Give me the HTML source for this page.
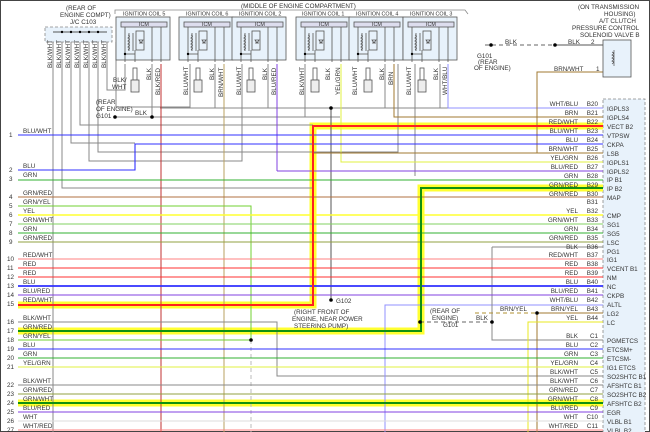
<!DOCTYPE html><html><head><meta charset="utf-8"><style>html,body{margin:0;padding:0;background:#fff;}svg{display:block}text{font-family:"Liberation Sans",sans-serif;font-size:6.3px;fill:#333}.ct{font-size:5.4px}</style></head><body>
<svg width="650" height="432" viewBox="0 0 650 432" xmlns="http://www.w3.org/2000/svg">
<rect x="0" y="0" width="650" height="432" fill="#fff"/>
<rect x="0.5" y="0.5" width="649" height="431" fill="none" stroke="#444" stroke-width="1"/>
<rect x="603" y="99" width="42" height="335" fill="#e8f2fb" stroke="#888" stroke-dasharray="3,2" stroke-width="0.8"/>
<g fill="none" stroke="#ffff30" stroke-width="7">
<polyline points="18,305 313,305 313,126 603,126"/>
<polyline points="18,331 421,331 421,188 603,188"/>
<line x1="18" y1="403" x2="603" y2="403"/>
</g>
<g fill="none" stroke-width="1">
<line x1="53" y1="42" x2="53" y2="432" stroke="#888"/>
<polyline points="62,42 62,188 313,188" stroke="#888"/>
<polyline points="71,42 71,143 135,143" stroke="#888"/>
<polyline points="80,42 80,125 313,125" stroke="#888"/>
<polyline points="89,42 89,161 242,161 242,64" stroke="#888"/>
<polyline points="98,42 98,152 398,152 398,64" stroke="#888"/>
<polyline points="107,42 107,90 125,90 125,64" stroke="#888"/>
<polyline points="116,42 116,107 190,107 190,64" stroke="#888"/>
<polyline points="305,64 305,117 152,117 152,64" stroke="#888"/>
<polyline points="215,64 215,108" stroke="#888"/>
<polyline points="268,64 268,108" stroke="#888"/>
<polyline points="385,64 385,108" stroke="#888"/>
<polyline points="440,64 440,108" stroke="#888"/>
<polyline points="415,64 415,176" stroke="#888"/>
<line x1="115" y1="117" x2="340" y2="117" stroke="#888"/>
<line x1="160" y1="108" x2="448" y2="108" stroke="#888"/>
<line x1="161" y1="64" x2="161" y2="432" stroke="#c03030"/>
<line x1="224" y1="64" x2="224" y2="432" stroke="#b8a060"/>
<polyline points="277,64 277,171" stroke="#8040e0"/>
<polyline points="341,64 341,162 603,162" stroke="#e0f040"/>
<polyline points="394,64 394,117 603,117" stroke="#a07830"/>
<polyline points="448,64 448,108 603,108" stroke="#9090ff"/>
<polyline points="18,206 251,206 251,340" stroke="#70d030"/>
<line x1="251" y1="340" x2="251" y2="432" stroke="#bbb" stroke-dasharray="4,3"/>
<polyline points="18,322 277,322 277,376 603,376" stroke="#888"/>
<line x1="331" y1="108" x2="331" y2="300" stroke="#555"/>
<polyline points="385,432 385,305 603,305" stroke="#9090ff"/>
<polyline points="492,247 603,247" stroke="#888"/>
<polyline points="492,247 492,340 603,340" stroke="#888"/>
<polyline points="603,72 537,72 537,153" stroke="#a07830"/>
<line x1="537" y1="313" x2="537" y2="432" stroke="#a07830"/>
<line x1="537" y1="313" x2="603" y2="313" stroke="#a07830"/>
<line x1="475" y1="313" x2="537" y2="313" stroke="#b09030" stroke-dasharray="4,3"/>
<line x1="420" y1="322" x2="492" y2="322" stroke="#666" stroke-dasharray="4,3"/>
<polyline points="528,432 528,322 603,322" stroke="#e8e820"/>
<line x1="485" y1="45" x2="555" y2="45" stroke="#666" stroke-dasharray="4,3"/>
<line x1="555" y1="45" x2="603" y2="45" stroke="#555"/>
</g>
<g fill="none" stroke-width="1.1">
<line x1="18" y1="135" x2="603" y2="135" stroke="#3030ff"/>
<polyline points="18,170 135,170 135,144 603,144" stroke="#3030ff"/>
<line x1="313" y1="153" x2="603" y2="153" stroke="#a07830"/>
<line x1="277" y1="171" x2="603" y2="171" stroke="#8040e0"/>
<line x1="18" y1="180" x2="603" y2="180" stroke="#30b030"/>
<line x1="18" y1="197" x2="603" y2="197" stroke="#b07040"/>
<line x1="18" y1="215" x2="603" y2="215" stroke="#ffff30" stroke-width="1.6"/>
<line x1="18" y1="224" x2="603" y2="224" stroke="#80d060"/>
<line x1="18" y1="233" x2="603" y2="233" stroke="#30b030"/>
<line x1="18" y1="242" x2="603" y2="242" stroke="#90a040"/>
<line x1="18" y1="259" x2="603" y2="259" stroke="#ff8080"/>
<line x1="18" y1="268" x2="603" y2="268" stroke="#ff3030"/>
<line x1="18" y1="277" x2="603" y2="277" stroke="#ff3030"/>
<line x1="18" y1="286" x2="603" y2="286" stroke="#3030ff" stroke-width="1.8"/>
<line x1="18" y1="295" x2="603" y2="295" stroke="#8040e0"/>
<line x1="18" y1="340" x2="251" y2="340" stroke="#70d030"/>
<line x1="18" y1="349" x2="603" y2="349" stroke="#3030ff"/>
<line x1="18" y1="358" x2="603" y2="358" stroke="#30b030"/>
<line x1="18" y1="367" x2="603" y2="367" stroke="#e0f040"/>
<line x1="18" y1="385" x2="603" y2="385" stroke="#888"/>
<line x1="18" y1="394" x2="603" y2="394" stroke="#90a040"/>
<line x1="18" y1="412" x2="603" y2="412" stroke="#8040e0"/>
<line x1="18" y1="421" x2="603" y2="421" stroke="#ddd"/>
<line x1="18" y1="430" x2="603" y2="430" stroke="#ff8080"/>
</g>
<g fill="none" stroke-width="2">
<polyline points="18,305 313,305 313,126 603,126" stroke="#ff2020"/>
<polyline points="18,331 421,331 421,188 603,188" stroke="#109010"/>
<line x1="18" y1="403" x2="603" y2="403" stroke="#109010"/>
</g>
<g fill="#000"><circle cx="152" cy="117" r="1.8"/><circle cx="115" cy="117" r="1.8"/><circle cx="331" cy="108" r="1.8"/><circle cx="251" cy="340" r="1.8"/><circle cx="331" cy="300" r="1.8"/><circle cx="492" cy="322" r="1.8"/><circle cx="537" cy="313" r="1.8"/><circle cx="420" cy="322" r="1.8"/><circle cx="491" cy="45" r="1.8"/><circle cx="555" cy="45" r="1.8"/></g>
<rect x="45" y="27" width="67" height="15" fill="#e8f2fb" stroke="#888" stroke-dasharray="3,2" stroke-width="0.8"/>
<line x1="53" y1="32" x2="107" y2="32" stroke="#555"/>
<g fill="#000"><circle cx="62" cy="32" r="1.2"/><circle cx="71" cy="32" r="1.2"/><circle cx="80" cy="32" r="1.2"/><circle cx="89" cy="32" r="1.2"/><circle cx="98" cy="32" r="1.2"/></g>
<polyline points="115,14 115,10 465,10 468,14" fill="none" stroke="#888" stroke-width="0.8"/>
<g id="coil" fill="none" stroke="#555" stroke-width="0.8">
<rect x="116" y="17" width="54" height="43" fill="#e8f2fb"/>
<rect x="121" y="22" width="46" height="5" fill="#dde"/>
<line x1="125" y1="27" x2="125" y2="54"/><line x1="152" y1="27" x2="152" y2="62"/><line x1="161" y1="27" x2="161" y2="62"/>
<path d="M129,33 v18 M133,33 v18 M128,35 q3,1 0,3 q3,1 0,3 q3,1 0,3 q3,1 0,3 q3,1 0,3"/>
<rect x="136" y="31" width="8" height="19"/>
<path d="M139,40 l4,0 l-2,3 z M139,43 h4"/>
<line x1="125" y1="54" x2="135" y2="54"/><line x1="135" y1="50" x2="135" y2="62"/><line x1="125" y1="54" x2="125" y2="62"/>
<rect x="133" y="68" width="4" height="12"/><rect x="131" y="80" width="8" height="12" fill="#eee"/>
</g>
<use href="#coil" x="63"/><use href="#coil" x="116"/><use href="#coil" x="180"/><use href="#coil" x="233"/><use href="#coil" x="287"/>
<g fill="#000"><circle cx="125" cy="54" r="1.2"/><circle cx="188" cy="54" r="1.2"/><circle cx="241" cy="54" r="1.2"/><circle cx="305" cy="54" r="1.2"/><circle cx="358" cy="54" r="1.2"/><circle cx="412" cy="54" r="1.2"/></g>
<text x="66" y="10">(REAR OF</text><text x="60" y="17">ENGINE COMPT)</text><text x="70" y="24">J/C C103</text>
<text x="241" y="8">(MIDDLE OF ENGINE COMPARTMENT)</text>
<g class="ct"><text class="ct" x="123" y="15.5">IGNITION COIL 5</text><text class="ct" x="186" y="15.5">IGNITION COIL 6</text><text class="ct" x="239" y="15.5">IGNITION COIL 2</text><text class="ct" x="302" y="15.5">IGNITION COIL 1</text><text class="ct" x="356" y="15.5">IGNITION COIL 4</text><text class="ct" x="410" y="15.5">IGNITION COIL 3</text>
<text class="ct" x="139" y="26">ICM</text><text class="ct" x="202" y="26">ICM</text><text class="ct" x="255" y="26">ICM</text><text class="ct" x="319" y="26">ICM</text><text class="ct" x="372" y="26">ICM</text><text class="ct" x="426" y="26">ICM</text></g>
<text x="113" y="82">BLK/</text><text x="112" y="89">WHT</text>
<text x="96" y="104">(REAR</text><text x="96" y="111">OF ENGINE)</text><text x="96" y="118">G101</text><text x="135" y="115">BLK</text>
<text x="336" y="303">G102</text><text x="294" y="314">(RIGHT FRONT OF</text><text x="292" y="321">ENGINE, NEAR POWER</text><text x="294" y="328">STEERING PUMP)</text>
<text x="430" y="313">(REAR OF</text><text x="432" y="320">ENGINE)</text><text x="443" y="327">G101</text><text x="476" y="320">BLK</text><text x="500" y="311">BRN/YEL</text>
<text x="477" y="58">G101</text><text x="478" y="64">(REAR</text><text x="474" y="70">OF ENGINE)</text><text x="505" y="44">BLK</text><text x="568" y="44">BLK</text><text x="554" y="71">BRN/WHT</text><text x="591" y="44">2</text><text x="596" y="71">1</text>
<text x="578" y="9">(ON TRANSMISSION</text><text x="604" y="16">HOUSING)</text><text x="599" y="23">A/T CLUTCH</text><text x="572" y="30">PRESSURE CONTROL</text><text x="580" y="37">SOLENOID VALVE B</text>
<rect x="603" y="40" width="28" height="37" fill="#e8f2fb" stroke="#555" stroke-width="0.8"/>
<path d="M614,50 v16 M612,52 q3,1 0,3 q3,1 0,3 q3,1 0,3 q3,1 0,3" fill="none" stroke="#555" stroke-width="0.7"/>
<g font-size="6">
<text transform="translate(52,68) rotate(-90)">BLK/WHT</text><text transform="translate(61,68) rotate(-90)">BLK/WHT</text><text transform="translate(70,68) rotate(-90)">BLK/WHT</text><text transform="translate(79,68) rotate(-90)">BLK/WHT</text><text transform="translate(88,68) rotate(-90)">BLK/WHT</text><text transform="translate(97,68) rotate(-90)">BLK/WHT</text><text transform="translate(106,68) rotate(-90)">BLK/WHT</text>
<text transform="translate(151,80) rotate(-90)">BLK</text><text transform="translate(160,95) rotate(-90)">BLK/RED</text>
<text transform="translate(188,95) rotate(-90)">BLU/WHT</text><text transform="translate(214,80) rotate(-90)">BLK</text><text transform="translate(223,97) rotate(-90)">BRN/WHT</text>
<text transform="translate(241,95) rotate(-90)">BLU/WHT</text><text transform="translate(267,80) rotate(-90)">BLK</text><text transform="translate(276,95) rotate(-90)">BLU/RED</text>
<text transform="translate(304,95) rotate(-90)">BLK/WHT</text><text transform="translate(330,80) rotate(-90)">BLK</text><text transform="translate(340,95) rotate(-90)">YEL/GRN</text>
<text transform="translate(357,95) rotate(-90)">BLU/WHT</text><text transform="translate(384,80) rotate(-90)">BLK</text><text transform="translate(393,85) rotate(-90)">BRN</text>
<text transform="translate(411,95) rotate(-90)">BLU/WHT</text><text transform="translate(438,80) rotate(-90)">BLK</text><text transform="translate(447,95) rotate(-90)">WHT/BLU</text>
</g>
<g>
<text x="9" y="137">1</text><text x="23" y="133">BLU/WHT</text>
<text x="9" y="172">2</text><text x="23" y="168">BLU</text>
<text x="9" y="181">3</text><text x="23" y="177">GRN</text>
<text x="9" y="199">4</text><text x="23" y="195">GRN/RED</text>
<text x="9" y="208">5</text><text x="23" y="204">GRN/YEL</text>
<text x="9" y="217">6</text><text x="23" y="213">YEL</text>
<text x="9" y="226">7</text><text x="23" y="222">GRN/WHT</text>
<text x="9" y="235">8</text><text x="23" y="231">GRN</text>
<text x="9" y="244">9</text><text x="23" y="240">GRN/RED</text>
<text x="7" y="261">10</text><text x="23" y="257">RED/WHT</text>
<text x="7" y="270">11</text><text x="23" y="266">RED</text>
<text x="7" y="279">12</text><text x="23" y="275">RED</text>
<text x="7" y="288">13</text><text x="23" y="284">BLU</text>
<text x="7" y="297">14</text><text x="23" y="293">BLU/RED</text>
<text x="7" y="306">15</text><text x="23" y="302">RED/WHT</text>
<text x="7" y="324">16</text><text x="23" y="320">BLK/WHT</text>
<text x="7" y="333">17</text><text x="23" y="329">GRN/RED</text>
<text x="7" y="342">18</text><text x="23" y="338">GRN/YEL</text>
<text x="7" y="351">19</text><text x="23" y="347">BLU</text>
<text x="7" y="360">20</text><text x="23" y="356">GRN</text>
<text x="7" y="369">21</text><text x="23" y="365">YEL/GRN</text>
<text x="7" y="387">22</text><text x="23" y="383">BLK/WHT</text>
<text x="7" y="396">23</text><text x="23" y="392">GRN/RED</text>
<text x="7" y="405">24</text><text x="23" y="401">GRN/WHT</text>
<text x="7" y="414">25</text><text x="23" y="410">BLU/RED</text>
<text x="7" y="423">26</text><text x="23" y="419">WHT</text>
<text x="7" y="432">27</text><text x="23" y="428">WHT/RED</text>
</g>
<g text-anchor="end">
<text x="578" y="106">WHT/BLU</text><text x="578" y="115">BRN</text><text x="578" y="124">RED/WHT</text><text x="578" y="133">BLU/WHT</text><text x="578" y="142">BLU</text><text x="578" y="151">BRN/WHT</text><text x="578" y="160">YEL/GRN</text><text x="578" y="169">BLU/RED</text><text x="578" y="178">GRN</text><text x="578" y="187">GRN/RED</text><text x="578" y="196">GRN/RED</text><text x="578" y="213">YEL</text><text x="578" y="222">GRN/WHT</text><text x="578" y="231">GRN</text><text x="578" y="240">GRN/RED</text><text x="578" y="249">BLK</text><text x="578" y="257">RED/WHT</text><text x="578" y="266">RED</text><text x="578" y="275">RED</text><text x="578" y="284">BLU</text><text x="578" y="293">BLU/RED</text><text x="578" y="302">WHT/BLU</text><text x="578" y="311">BRN/YEL</text><text x="578" y="320">YEL</text>
<text x="578" y="338">BLK</text><text x="578" y="347">BLU</text><text x="578" y="356">GRN</text><text x="578" y="365">YEL/GRN</text><text x="578" y="374">BLK/WHT</text><text x="578" y="383">BLK/WHT</text><text x="578" y="392">GRN/RED</text><text x="578" y="401">GRN/WHT</text><text x="578" y="410">BLU/RED</text><text x="578" y="419">WHT</text><text x="578" y="428">WHT/RED</text>
<text x="598" y="106">B20</text><text x="598" y="115">B21</text><text x="598" y="124">B22</text><text x="598" y="133">B23</text><text x="598" y="142">B24</text><text x="598" y="151">B25</text><text x="598" y="160">B26</text><text x="598" y="169">B27</text><text x="598" y="178">B28</text><text x="598" y="187">B29</text><text x="598" y="196">B30</text><text x="598" y="204">B31</text><text x="598" y="213">B32</text><text x="598" y="222">B33</text><text x="598" y="231">B34</text><text x="598" y="240">B35</text><text x="598" y="249">B36</text><text x="598" y="257">B37</text><text x="598" y="266">B38</text><text x="598" y="275">B39</text><text x="598" y="284">B40</text><text x="598" y="293">B41</text><text x="598" y="302">B42</text><text x="598" y="311">B43</text><text x="598" y="320">B44</text>
<text x="598" y="338">C1</text><text x="598" y="347">C2</text><text x="598" y="356">C3</text><text x="598" y="365">C4</text><text x="598" y="374">C5</text><text x="598" y="383">C6</text><text x="598" y="392">C7</text><text x="598" y="401">C8</text><text x="598" y="410">C9</text><text x="598" y="419">C10</text><text x="598" y="428">C11</text>
</g>
<g>
<text x="607" y="111">IGPLS3</text><text x="607" y="120">IGPLS4</text><text x="607" y="129">VECT B2</text><text x="607" y="138">VTPSW</text><text x="607" y="147">CKPA</text><text x="607" y="156">LSB</text><text x="607" y="165">IGPLS1</text><text x="607" y="174">IGPLS2</text><text x="607" y="182">IP B1</text><text x="607" y="191">IP B2</text><text x="607" y="200">MAP</text><text x="607" y="218">CMP</text><text x="607" y="227">SG1</text><text x="607" y="236">SG5</text><text x="607" y="245">LSC</text><text x="607" y="254">PG1</text><text x="607" y="262">IG1</text><text x="607" y="271">VCENT B1</text><text x="607" y="280">NM</text><text x="607" y="289">NC</text><text x="607" y="298">CKPB</text><text x="607" y="307">ALTL</text><text x="607" y="316">LG2</text><text x="607" y="325">LC</text>
<text x="607" y="343">PGMETCS</text><text x="607" y="352">ETCSM+</text><text x="607" y="361">ETCSM-</text><text x="607" y="370">IG1 ETCS</text><text x="607" y="379">SO2SHTC B1</text><text x="607" y="388">AFSHTC B1</text><text x="607" y="397">SO2SHTC B2</text><text x="607" y="406">AFSHTC B2</text><text x="607" y="415">EGR</text><text x="607" y="424">VLBL B1</text><text x="607" y="433">VLBL B2</text>
</g>
</svg>
</body></html>
